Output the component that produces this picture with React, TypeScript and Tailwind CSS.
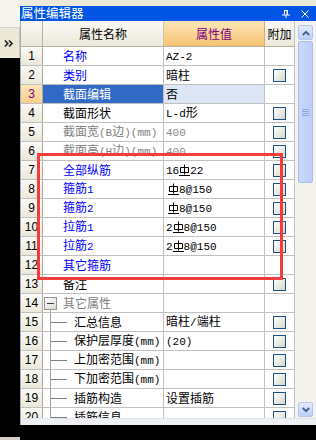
import React from "react";

type Row = {
  n: number;
  name: string;
  nc: "blue" | "black" | "gray" | "sel";
  val?: string;
  vgray?: boolean;
  vpad?: boolean;
  cb: boolean;
  tree?: "root" | "child";
};

const rows: Row[] = [
  { n: 1, name: "名称", nc: "blue", val: "AZ-2", cb: false },
  { n: 2, name: "类别", nc: "blue", val: "暗柱", cb: true },
  { n: 3, name: "截面编辑", nc: "sel", val: "否", cb: false },
  { n: 4, name: "截面形状", nc: "black", val: "L-d形", cb: true },
  { n: 5, name: "截面宽(B边)(mm)", nc: "gray", val: "400", vgray: true, cb: true },
  { n: 6, name: "截面高(H边)(mm)", nc: "gray", val: "400", vgray: true, cb: true },
  { n: 7, name: "全部纵筋", nc: "blue", val: "16Φ22", cb: true },
  { n: 8, name: "箍筋1", nc: "blue", val: "Φ8@150", vpad: true, cb: true },
  { n: 9, name: "箍筋2", nc: "blue", val: "Φ8@150", vpad: true, cb: true },
  { n: 10, name: "拉筋1", nc: "blue", val: "2Φ8@150", cb: true },
  { n: 11, name: "拉筋2", nc: "blue", val: "2Φ8@150", cb: true },
  { n: 12, name: "其它箍筋", nc: "blue", cb: false },
  { n: 13, name: "备注", nc: "black", cb: true },
  { n: 14, name: "其它属性", nc: "gray", tree: "root", cb: false },
  { n: 15, name: "汇总信息", nc: "black", tree: "child", val: "暗柱/端柱", cb: true },
  { n: 16, name: "保护层厚度(mm)", nc: "black", tree: "child", val: "(20)", cb: true },
  { n: 17, name: "上加密范围(mm)", nc: "black", tree: "child", cb: true },
  { n: 18, name: "下加密范围(mm)", nc: "black", tree: "child", cb: true },
  { n: 19, name: "插筋构造", nc: "black", tree: "child", val: "设置插筋", cb: true },
  { n: 20, name: "插筋信息", nc: "black", tree: "child", cb: true },
];

function RebarSym({ pad }: { pad?: boolean }) {
  return (
    <svg
      width="11"
      height="12"
      viewBox="0 0 11 12"
      className={pad ? "inline-block align-[-2px] ml-[2px]" : "inline-block align-[-2px]"}
    >
      <path
        d="M5.5 0.5V10.5M1.5 3.5H9.5V8.5H1.5ZM0 11.5H11"
        stroke="currentColor"
        strokeWidth="1"
        fill="none"
      />
    </svg>
  );
}

function Txt({ s, pad }: { s: string; pad?: boolean }) {
  const parts = s.split(/([\x21-\x7e]+|Φ)/).filter((p) => p.length > 0);
  return (
    <>
      {parts.map((p, i) => {
        if (p === "Φ") return <RebarSym key={i} pad={pad} />;
        if (/^[\x21-\x7e]+$/.test(p))
          return (
            <span key={i} className="font-['Liberation_Mono',monospace] text-[11px]">
              {p}
            </span>
          );
        return <span key={i}>{p}</span>;
      })}
    </>
  );
}

function Checkbox() {
  return (
    <div className="w-[13px] h-[13px] border border-[#1c5180] bg-linear-to-br from-white to-[#d6d6ce]" />
  );
}

function NameCell({ r }: { r: Row }) {
  const color =
    r.nc === "blue"
      ? "text-[#0000ff]"
      : r.nc === "gray"
      ? "text-[#808080]"
      : r.nc === "sel"
      ? "text-white bg-[#316ac5]"
      : "text-black";
  const pad = r.tree === "child" ? "pl-[31px]" : "pl-[20px]";
  return (
    <div
      className={`relative w-[121px] h-full border-r border-[#c0c0c0] flex items-center whitespace-nowrap overflow-hidden ${pad} ${color}`}
    >
      {r.tree === "root" && (
        <>
          <div className="absolute left-[1px] top-[3px] w-[13px] h-[13px] border border-[#959595] bg-linear-to-br from-white to-[#d8d8d0] flex items-center justify-center">
            <div className="w-[7px] h-px bg-[#404040]" />
          </div>
          <div className="absolute left-[7px] top-[16px] bottom-0 w-px bg-[#a0a0a0]" />
        </>
      )}
      {r.tree === "child" && (
        <>
          <div className="absolute left-[7px] top-0 bottom-0 w-px bg-[#a0a0a0]" />
          <div className="absolute left-[8px] top-[9px] w-[16px] h-px bg-[#808080]" />
        </>
      )}
      <span className="leading-[18px]">
        <Txt s={r.name} />
      </span>
    </div>
  );
}

export default function App() {
  return (
    <div className="relative w-[316px] h-[440px] overflow-hidden flex bg-black font-['Noto_Sans_CJK_SC',sans-serif] text-[12px]">
      {/* left strip */}
      <div className="w-[20px] flex flex-col">
        <div className="h-[28px] bg-[#f5f4ef] border-b border-[#d6d3c6]" />
        <div className="h-[30px] bg-[#ece9d8] border-r border-[#c9c6b6] flex items-center justify-center">
          <svg width="10" height="7" viewBox="0 0 10 7" className="ml-[-2px]">
            <path
              d="M0.8 0.5L3.8 3.5L0.8 6.5M5 0.5L8 3.5L5 6.5"
              stroke="#222"
              strokeWidth="1.6"
              fill="none"
            />
          </svg>
        </div>
        <div className="flex-1 bg-black" />
        <div className="h-[3px] bg-[#d4d0c8]" />
      </div>

      {/* panel */}
      <div className="flex-1 flex flex-col">
        <div className="h-[6px] bg-[#ece9d8]" />
        <div className="h-[15px] bg-[#0055e5] flex items-center text-white pl-[1px]">
          <span className="leading-none text-[12.5px]">属性编辑器</span>
          <div className="ml-auto flex items-center gap-[11px] pr-[7px]">
            <svg width="8" height="8" viewBox="0 0 8 8">
              <path
                d="M2.5 0V4.5M2 0.5H6M5.5 0V4.5M0 5H8M4 5V8"
                stroke="white"
                strokeWidth="1"
                fill="none"
              />
              <rect x="4.5" y="0.5" width="1.5" height="4" fill="white" />
            </svg>
            <svg width="8" height="8" viewBox="0 0 8 8">
              <path d="M0.5 0.5L7.5 7.5M7.5 0.5L0.5 7.5" stroke="white" strokeWidth="1" />
            </svg>
          </div>
        </div>

        <div className="h-[397px] flex border-l border-[#a4aec0] bg-white overflow-hidden">
          <div className="flex-1 flex flex-col">
            {/* header */}
            <div className="h-[26px] shrink-0 flex border-b border-[#b4b1a2]">
              <div className="w-[22px] h-full border-r border-[#b4b1a2] bg-linear-to-b from-[#fbfaf6] to-[#e9e6d7]" />
              <div className="w-[121px] h-full border-r border-[#c9c6b6] bg-linear-to-b from-[#fbfaf6] to-[#ebe8da] flex items-center justify-center text-black">
                属性名称
              </div>
              <div className="w-[101px] h-full border-r border-[#d9b06a] bg-linear-to-b from-[#fde6b8] to-[#f5c272] flex items-center justify-center text-[#800080]">
                属性值
              </div>
              <div className="w-[30px] h-full border-r border-[#c9c6b6] bg-linear-to-b from-[#fbfaf6] to-[#ebe8da] flex items-center justify-center text-black">
                附加
              </div>
            </div>
            {/* rows */}
            {rows.map((r) => (
              <div key={r.n} className="h-[19px] shrink-0 flex border-b border-[#c0c0c0]">
                <div
                  className={`w-[22px] h-full border-r border-[#aeaba0] flex items-center justify-center font-['Liberation_Sans',sans-serif] text-[12px] ${
                    r.n === 3
                      ? "bg-linear-to-b from-[#fee4b6] to-[#fbcf8c] text-[#800080]"
                      : "bg-linear-to-b from-[#fbfaf6] to-[#ebe8da] text-black"
                  }`}
                >
                  {r.n}
                </div>
                <NameCell r={r} />
                <div
                  className={`w-[101px] h-full border-r border-[#c0c0c0] flex items-center pl-[2px] whitespace-nowrap overflow-hidden ${
                    r.n === 3 ? "bg-[#dce6f4]" : ""
                  } ${r.vgray ? "text-[#8a8a8a]" : "text-black"}`}
                >
                  {r.val && (
                    <span className="leading-[18px]">
                      <Txt s={r.val} pad={r.vpad} />
                    </span>
                  )}
                </div>
                <div className="w-[30px] h-full border-r border-[#c0c0c0] flex items-center justify-center">
                  {r.cb && <Checkbox />}
                </div>
              </div>
            ))}
          </div>

          {/* scrollbar */}
          <div className="w-[21px] bg-[#f4f3ee] flex flex-col items-center pt-[4px] pb-[1px]">
            <div className="w-[15px] h-[15px] rounded-[2px] border border-[#b4c6f0] bg-linear-to-b from-[#e2eafe] to-[#bccffb] flex items-center justify-center">
              <svg width="8" height="6" viewBox="0 0 8 6">
                <path d="M0.8 5L4 1.8L7.2 5" stroke="#4d6185" strokeWidth="2" fill="none" />
              </svg>
            </div>
            <div className="mt-[1px] w-[15px] h-[142px] rounded-[2px] border border-[#aabde9] bg-linear-to-r from-[#cad8fc] to-[#bccdf9] flex flex-col items-center justify-center gap-[1px]">
              <div className="w-[7px] h-px bg-[#8ca4dc]" />
              <div className="w-[7px] h-px bg-[#8ca4dc]" />
              <div className="w-[7px] h-px bg-[#8ca4dc]" />
              <div className="w-[7px] h-px bg-[#8ca4dc]" />
            </div>
            <div className="flex-1" />
            <div className="w-[15px] h-[15px] rounded-[2px] border border-[#b4c6f0] bg-linear-to-b from-[#e2eafe] to-[#bccffb] flex items-center justify-center">
              <svg width="8" height="6" viewBox="0 0 8 6">
                <path d="M0.8 1L4 4.2L7.2 1" stroke="#4d6185" strokeWidth="2" fill="none" />
              </svg>
            </div>
          </div>
        </div>

        <div className="h-[7px] bg-[#eef0f3] border-l border-[#a4aec0] border-t border-t-[#dfe3ea]" />
        <div className="h-[15px] bg-black" />
      </div>

      {/* red annotation */}
      <div className="absolute left-[37px] top-[153px] w-[246px] h-[127px] border-[3px] border-[#f43c3c] pointer-events-none" />
    </div>
  );
}
